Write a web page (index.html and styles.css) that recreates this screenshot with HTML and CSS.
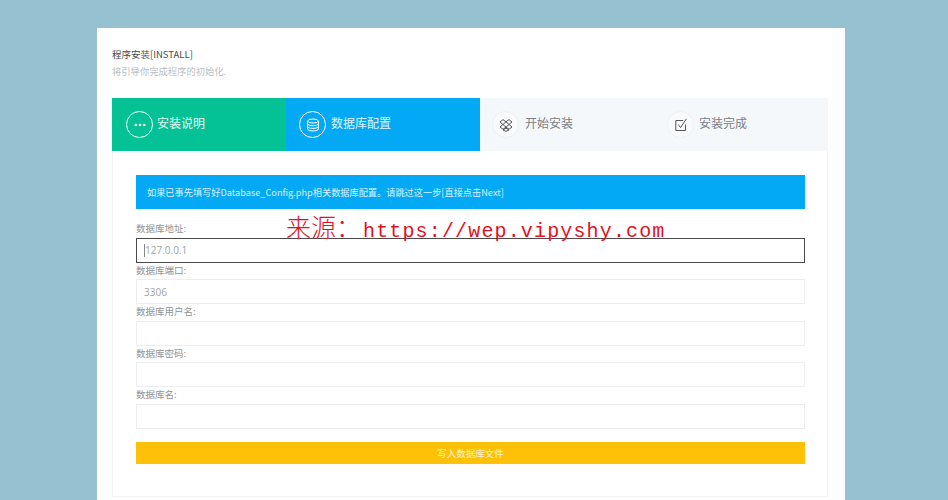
FILE: index.html
```html
<!DOCTYPE html>
<html lang="zh-CN">
<head>
<meta charset="utf-8">
<title>程序安装</title>
<link rel="stylesheet" href="styles.css">
</head>
<body>
<main class="card">
  <header class="head">
    <h1 class="title">程序安装[INSTALL]</h1>
    <p class="sub">将引导你完成程序的初始化.</p>
  </header>
  <nav class="steps">
    <div class="step step-green">
      <span class="circle"><svg width="14" height="14" viewBox="0 0 14 14"><circle cx="2.8" cy="7" r="1.3" fill="#fff"/><circle cx="7" cy="7" r="1.3" fill="#fff"/><circle cx="11.2" cy="7" r="1.3" fill="#fff"/></svg></span>
      <span class="label-step">安装说明</span>
    </div>
    <div class="step step-blue">
      <span class="circle"><svg width="14" height="14" viewBox="0 0 14 14" fill="none" stroke="#fff" stroke-width="1"><ellipse cx="7" cy="3" rx="5.4" ry="2"/><path d="M1.6 3v8c0 1.1 2.4 2 5.4 2s5.4-.9 5.4-2V3M1.6 5.7c0 1.1 2.4 2 5.4 2s5.4-.9 5.4-2M1.6 8.4c0 1.1 2.4 2 5.4 2s5.4-.9 5.4-2"/></svg></span>
      <span class="label-step">数据库配置</span>
    </div>
    <div class="step step-third">
      <span class="circle circle-light"><svg width="14" height="14" viewBox="0 0 14 14" fill="none" stroke="#555" stroke-width="1"><path d="M4 1.6 7 3.8 10 1.6 13 4 10 6.5 13 9 10 11.2 7 9.2 4 11.2 1 9 4 6.5 1 4ZM4 6.5 7 3.8 10 6.5 7 9.2ZM4 12 7 10.2 10 12 7 13.4Z"/></svg></span>
      <span class="label-step">开始安装</span>
    </div>
    <div class="step step-fourth">
      <span class="circle circle-light"><svg width="14" height="14" viewBox="0 0 14 14" fill="none" stroke="#555" stroke-width="1"><path d="M11.5 6.5v6H1.8V2.5h7.4"/><path d="M4.4 6.6 6.6 9.6 12.4.8"/></svg></span>
      <span class="label-step">安装完成</span>
    </div>
  </nav>
  <section class="panel">
    <div class="alert">如果已事先填写好Database_Config.php相关数据库配置。请跳过这一步[直接点击Next]</div>
    <form class="form">
      <label class="field">
        <span class="field-label">数据库地址:</span>
        <span class="input-wrap"><input class="input input-focus" type="text" value="127.0.0.1"><i class="caret"></i></span>
      </label>
      <label class="field">
        <span class="field-label">数据库端口:</span>
        <input class="input" type="text" value="3306">
      </label>
      <label class="field">
        <span class="field-label">数据库用户名:</span>
        <input class="input" type="text">
      </label>
      <label class="field">
        <span class="field-label">数据库密码:</span>
        <input class="input" type="password">
      </label>
      <label class="field">
        <span class="field-label">数据库名:</span>
        <input class="input" type="text">
      </label>
      <button class="submit" type="button">写入数据库文件</button>
    </form>
  </section>
</main>
<div class="watermark"><span class="wm-cjk">来源&#xFF1A;</span>https://wep.vipyshy.com</div>
</body>
</html>
```
FILE: styles.css
```css
* { box-sizing: border-box; }
body {
  margin: 0;
  height: 500px;
  overflow: hidden;
  background: #95c1d0;
  padding: 28px 103px 0 97px;
  font-family: "Noto Sans CJK SC", "Open Sans", sans-serif;
  position: relative;
}
.card {
  background: #fff;
  height: 472px;
  padding: 19px 17px 0 15px;
}
.head { height: 51px; }
.title {
  margin: 0;
  font-size: 9.5px;
  font-weight: 400;
  line-height: 14px;
  color: #4a4a4a;
}
.sub {
  margin: 3px 0 0;
  font-size: 9.3px;
  line-height: 14px;
  color: #bcc0c2;
}
.steps {
  display: grid;
  grid-template-columns: 174px 194px 175px 173px;
  height: 53px;
  background: #f5f8fb;
}
.step {
  display: flex;
  align-items: center;
  gap: 4px;
  font-size: 12px;
  color: #7a7e82;
  padding-left: 14px;
}
.step-green { background: #04c295; color: #e6f9f3; }
.step-blue { background: #04a9f5; color: #dff3fd; padding-left: 13px; gap: 5px; }
.step-third { padding-left: 12px; gap: 6px; }
.step-fourth { padding-left: 12px; gap: 5px; }
.circle {
  width: 27px;
  height: 27px;
  border: 1px solid #fff;
  border-radius: 50%;
  display: flex;
  align-items: center;
  justify-content: center;
  flex: none;
}
.circle-light { border-color: #eef0f2; background: #f8fafb; }
.label-step { line-height: 16px; margin-top: -3px; }
.panel {
  height: 346px;
  border: 1px solid #f0f2f4;
  border-top: 0;
  padding: 24px 22px 0 23px;
}
.alert {
  height: 34px;
  background: #04a9f5;
  color: #d9f1fd;
  font-size: 9.2px;
  line-height: 34px;
  padding-left: 11px;
  white-space: nowrap;
}
.form { padding-top: 12px; }
.field { display: block; height: 41.5px; }
.field-label {
  display: block;
  height: 16.5px;
  font-size: 9.5px;
  line-height: 15px;
  color: #909396;
}
.input-wrap { display: block; position: relative; }
.input {
  display: block;
  width: 100%;
  height: 25px;
  border: 1px solid #eceeef;
  background: #fff;
  padding: 0 7px;
  font-family: "Open Sans", "Noto Sans CJK SC", sans-serif;
  font-size: 10px;
  color: #a0a3a6;
  outline: none;
  border-radius: 0;
}
.input-focus { border-color: #4a4a4a; padding-left: 8px; }
.caret {
  position: absolute;
  left: 8px;
  top: 6px;
  width: 1px;
  height: 13px;
  background: #888;
}
.submit {
  display: block;
  width: 100%;
  height: 22px;
  margin-top: 13px;
  border: 0;
  background: #ffc107;
  color: #fff3cf;
  font-family: inherit;
  font-size: 9.5px;
  padding: 0;
  border-radius: 0;
}
.watermark {
  position: absolute;
  left: 286px;
  top: 211px;
  font-family: "Liberation Mono", monospace;
  font-size: 20px;
  letter-spacing: 1.15px;
  line-height: 30px;
  color: #e1121f;
  white-space: pre;
}
.wm-cjk { font-family: "Noto Sans CJK SC", sans-serif; font-size: 25px; font-weight: 300; letter-spacing: 0; margin-right: 2px; }
```
